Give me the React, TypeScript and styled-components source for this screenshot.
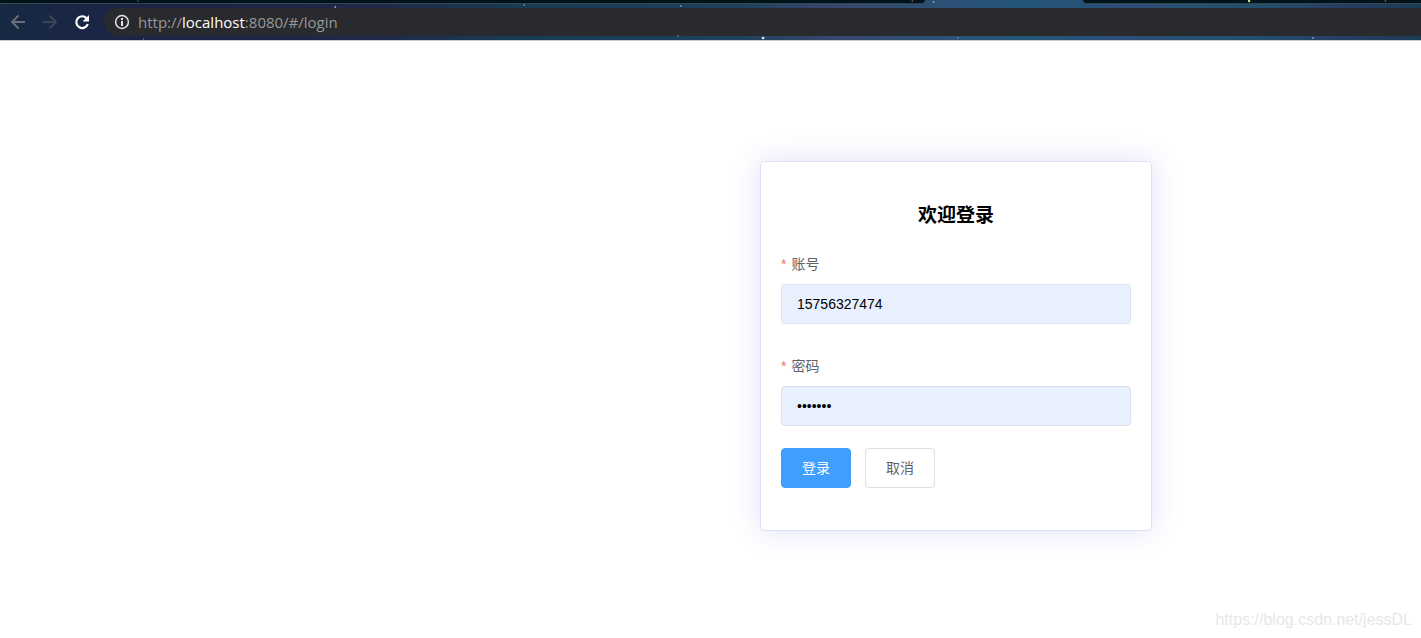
import React, { useState } from "react";
import styled, { createGlobalStyle } from "styled-components";

const GlobalStyle = createGlobalStyle`
  * { box-sizing: border-box; }
  body {
    margin: 0;
    background: #ffffff;
    font-family: "Liberation Sans", "Noto Sans CJK SC", sans-serif;
  }
`;

const Page = styled.div`
  display: flex;
  flex-direction: column;
  min-height: 100vh;
`;

const BrowserBar = styled.header`
  position: relative;
  background: linear-gradient(
    90deg,
    #172943 0%,
    #1b2445 9%,
    #20284a 26%,
    #183a55 36%,
    #1c425d 52%,
    #38456c 58%,
    #2f4e74 64%,
    #235677 72%,
    #2b4e76 79%,
    #23506f 88%,
    #263f64 94%,
    #1b3c56 100%
  );
  border-bottom: 1px solid #c8ccd2;
`;

const TabStrip = styled.div`
  display: flex;
  justify-content: space-between;
  height: 4px;
`;

const InactiveTabs = styled.div<{ $side: "left" | "right" }>`
  width: ${(p) => (p.$side === "left" ? "65.1%" : "23.8%")};
  background: #01141c;
  border-bottom: 1px solid #35434a;
  border-radius: ${(p) => (p.$side === "left" ? "0 0 4px 0" : "0 0 0 4px")};
`;

const Toolbar = styled.div`
  display: flex;
  align-items: center;
  padding: 4px 0 4px 10px;
`;

const NavButton = styled.button<{ $tone: string }>`
  display: flex;
  width: 16px;
  height: 16px;
  margin-right: 16px;
  padding: 0;
  border: 0;
  background: none;
  color: ${(p) => p.$tone};
`;

const AddressBar = styled.div`
  display: flex;
  flex: 1;
  align-items: center;
  gap: 8px;
  height: 28px;
  margin-left: -2px;
  padding-left: 10px;
  border-radius: 14px 0 0 14px;
  background: #292a2d;
`;

const Address = styled.span`
  color: #96989b;
  font-family: "Open Sans", "Noto Sans", sans-serif;
  font-size: 15px;
  line-height: 20px;
`;

const Host = styled.span`
  color: #ffffff;
`;

const Stars = styled.svg`
  position: absolute;
  inset: 0;
  width: 100%;
  height: 100%;
  pointer-events: none;
`;

const Main = styled.main`
  display: flex;
  flex: 1;
  justify-content: flex-end;
  align-items: flex-start;
  padding: 120px 269px 0 20px;
`;

const Card = styled.form`
  width: 392px;
  padding: 40px 20px 42px;
  border: 1px solid #dcdff8;
  border-radius: 5px;
  background: #ffffff;
  box-shadow: 0 0 30px #dfdffa;
`;

const Title = styled.h3`
  margin: 0 0 14px;
  color: #000000;
  font-size: 19px;
  line-height: 28px;
  text-align: center;
`;

const Field = styled.div`
  display: flex;
  flex-direction: column;
  margin-bottom: 22px;
`;

const Label = styled.label`
  color: #606266;
  font-size: 14px;
  line-height: 40px;
`;

const Required = styled.span`
  margin-right: 5px;
  color: #f56c6c;
`;

const TextInput = styled.input`
  width: 100%;
  height: 40px;
  padding: 0 15px;
  border: 1px solid #dcdfe6;
  border-radius: 4px;
  outline: none;
  background: #e8f0fe;
  color: #000000;
  font-family: "Liberation Sans", sans-serif;
  font-size: 14px;
`;

const Actions = styled.div`
  display: flex;
  gap: 14px;
`;

const Button = styled.button<{ $primary?: boolean }>`
  height: 40px;
  padding: 0 20px 2px;
  border: 1px solid ${(p) => (p.$primary ? "#409eff" : "#dcdfe6")};
  border-radius: 4px;
  background: ${(p) => (p.$primary ? "#409eff" : "#ffffff")};
  color: ${(p) => (p.$primary ? "#ffffff" : "#606266")};
  font-family: "Liberation Sans", "Noto Sans CJK SC", sans-serif;
  font-size: 14px;
`;

const Footer = styled.footer`
  padding: 0 9px 8px;
  color: #e7e7e7;
  font-size: 16px;
  line-height: 20px;
  text-align: right;
`;

const stars = [
  { x: "9.7%", y: 1, r: 0.8, fill: "#5d7355" },
  { x: "23.6%", y: 7, r: 0.9, fill: "#9aa8bd" },
  { x: "10.1%", y: 39, r: 0.8, fill: "#73839a" },
  { x: "36.9%", y: 5, r: 0.9, fill: "#5b97ab" },
  { x: "47.9%", y: 6, r: 0.9, fill: "#7793ad" },
  { x: "47.7%", y: 36, r: 0.8, fill: "#7e86a5" },
  { x: "53.7%", y: 38, r: 1.3, fill: "#e7eef6" },
  { x: "64.2%", y: 1, r: 0.8, fill: "#8a8c4a" },
  { x: "65.7%", y: 2, r: 0.9, fill: "#7da4c2" },
  { x: "67.4%", y: 38, r: 0.8, fill: "#7194b5" },
  { x: "87.9%", y: 1, r: 1.2, fill: "#d8dd86" },
  { x: "92.4%", y: 38, r: 0.9, fill: "#7f9db4" },
  { x: "97.5%", y: 1, r: 0.9, fill: "#656d45" },
];

const ArrowIcon = ({ forward = false }: { forward?: boolean }) => (
  <svg width="16" height="16" viewBox="0 0 16 16" fill="none" stroke="currentColor" strokeWidth="1.8">
    <path d={forward ? "M1 8h13M7.5 1.5 14 8l-6.500 6.500" : "M15 8H2M8.500 1.500 2 8l6.500 6.500"} />
  </svg>
);

const ReloadIcon = () => (
  <svg width="16" height="16" viewBox="0 0 16 16">
    <path d="M12.600 4.200A5.900 5.900 0 1 0 13.800 10" fill="none" stroke="currentColor" strokeWidth="2.2" />
    <path d="M15 1v6.500H8.500z" fill="currentColor" />
  </svg>
);

const InfoIcon = () => (
  <svg width="16" height="16" viewBox="0 0 16 16" aria-hidden="true">
    <circle cx="8" cy="8" r="6.4" fill="none" stroke="#e3e4e6" strokeWidth="1.5" />
    <path d="M7 7h2v5H7zM7 4h2v2H7z" fill="#e3e4e6" />
  </svg>
);

export default function App() {
  const [account, setAccount] = useState("15756327474");
  const [password, setPassword] = useState("1234567");

  return (
    <Page>
      <GlobalStyle />
      <BrowserBar>
        <TabStrip>
          <InactiveTabs $side="left" />
          <InactiveTabs $side="right" />
        </TabStrip>
        <Toolbar>
          <NavButton type="button" aria-label="Back" $tone="#6b7079">
            <ArrowIcon />
          </NavButton>
          <NavButton type="button" aria-label="Forward" $tone="#3e4656">
            <ArrowIcon forward />
          </NavButton>
          <NavButton type="button" aria-label="Reload" $tone="#ffffff">
            <ReloadIcon />
          </NavButton>
          <AddressBar>
            <InfoIcon />
            <Address>
              http://<Host>localhost</Host>:8080/#/login
            </Address>
          </AddressBar>
        </Toolbar>
        <Stars aria-hidden="true">
          {stars.map((s) => (
            <circle key={s.x} cx={s.x} cy={s.y} r={s.r} fill={s.fill} />
          ))}
        </Stars>
      </BrowserBar>
      <Main>
        <Card onSubmit={(e) => e.preventDefault()}>
          <Title>欢迎登录</Title>
          <Field>
            <Label htmlFor="account">
              <Required>*</Required>账号
            </Label>
            <TextInput id="account" type="text" value={account} onChange={(e) => setAccount(e.target.value)} />
          </Field>
          <Field>
            <Label htmlFor="password">
              <Required>*</Required>密码
            </Label>
            <TextInput
              id="password"
              type="password"
              value={password}
              onChange={(e) => setPassword(e.target.value)}
            />
          </Field>
          <Actions>
            <Button type="submit" $primary>
              登录
            </Button>
            <Button type="button">取消</Button>
          </Actions>
        </Card>
      </Main>
      <Footer>https://blog.csdn.net/jessDL</Footer>
    </Page>
  );
}
